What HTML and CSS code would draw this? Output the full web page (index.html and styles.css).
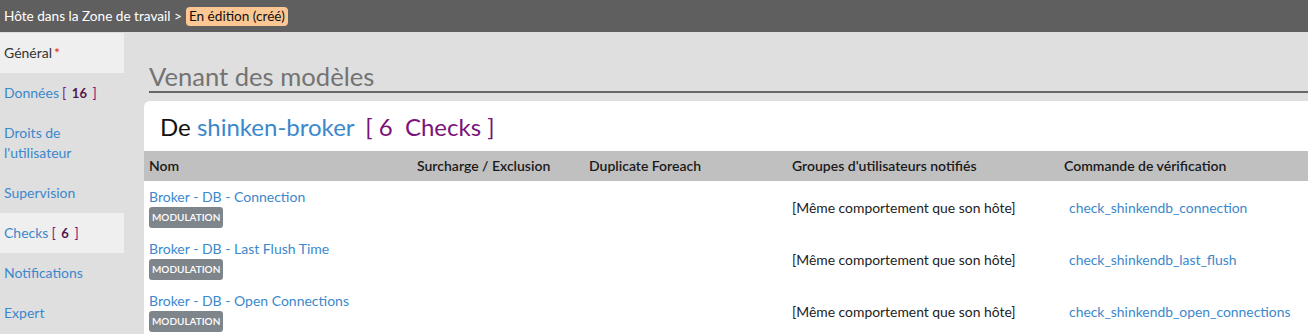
FILE: index.html
```html
<!DOCTYPE html>
<html lang="fr">
<head>
  <meta charset="UTF-8">
  <meta name="viewport" content="width=device-width, initial-scale=1.0">
  <title>Hôte dans la Zone de travail</title>
  <link rel="stylesheet" href="styles.css">
</head>
<body>
  <div class="topbar">
    <span>Hôte dans la Zone de travail &gt;</span>
    <span class="state">En édition (créé)</span>
  </div>

  <div class="page">
    <div class="sidebar">
      <a class="tab active">Général<span class="required">*</span></a>
      <a class="tab">Données<span class="count">[ <b>16</b> ]</span></a>
      <a class="tab">Droits de l'utilisateur</a>
      <a class="tab">Supervision</a>
      <a class="tab active">Checks<span class="count">[ <b>6</b> ]</span></a>
      <a class="tab">Notifications</a>
      <a class="tab">Expert</a>
    </div>

    <div class="content">
      <h2 class="section-title">Venant des modèles</h2>

      <div class="panel">
        <div class="panel-title">
          De <a class="template">shinken-broker</a>
          <span class="total">[ 6 &nbsp;Checks ]</span>
        </div>

        <div class="checks">
          <div class="row head">
            <div>Nom</div>
            <div>Surcharge / Exclusion</div>
            <div>Duplicate Foreach</div>
            <div>Groupes d'utilisateurs notifiés</div>
            <div>Commande de vérification</div>
          </div>
          <div class="row">
            <div><a>Broker - DB - Connection</a><span class="badge">MODULATION</span></div>
            <div></div>
            <div></div>
            <div class="mid">[Même comportement que son hôte]</div>
            <div class="mid command"><a>check_shinkendb_connection</a></div>
          </div>
          <div class="row">
            <div><a>Broker - DB - Last Flush Time</a><span class="badge">MODULATION</span></div>
            <div></div>
            <div></div>
            <div class="mid">[Même comportement que son hôte]</div>
            <div class="mid command"><a>check_shinkendb_last_flush</a></div>
          </div>
          <div class="row">
            <div><a>Broker - DB - Open Connections</a><span class="badge">MODULATION</span></div>
            <div></div>
            <div></div>
            <div class="mid">[Même comportement que son hôte]</div>
            <div class="mid command"><a>check_shinkendb_open_connections</a></div>
          </div>
        </div>
      </div>
    </div>
  </div>
</body>
</html>
```

FILE: styles.css
```css
body {
  font-family: Lato, "Open Sans", sans-serif;
  font-size: 14px;
  margin: 0;
  padding: 0;
  background-color: #dfdfdf;
  color: #222;
  overflow: hidden;
}
a {
  color: #3b88cc;
  text-decoration: none;
  cursor: pointer;
}

/* top bar */
.topbar {
  height: 32px;
  background-color: #5f5f5f;
  color: #fff;
  display: flex;
  align-items: center;
  padding-left: 4px;
  gap: 4px;
  font-size: 13.6px;
}
.state {
  background-color: #fcc793;
  color: #111;
  border-radius: 4px;
  padding: 1px 3px;
  line-height: 17px;
}

/* layout */
.page {
  display: flex;
}
.sidebar {
  width: 124px;
  flex-shrink: 0;
  padding-top: 1px;
  border-bottom: 1px solid #d0d0d0;
}
.tab {
  display: block;
  padding: 10px 4px;
  line-height: 20px;
  height: 20px;
}
.tab:nth-child(3) {
  height: 40px;
}
.tab.active {
  background-color: #efefef;
}
.tab:first-child {
  color: #333;
}
.required {
  color: #e02020;
  margin-left: 2px;
}
.count {
  color: #7a1a7a;
  margin-left: 3px;
}
.count b {
  color: #55154f;
  padding: 0 2px;
  font-size: 13px;
}

/* content */
.content {
  flex: 1;
  padding-left: 20px;
}
.section-title {
  font-size: 25.6px;
  font-weight: normal;
  color: #737373;
  margin: 29px 0 0 5px;
  line-height: 30px;
  border-bottom: 2px solid #666;
}
.panel {
  margin-top: 8px;
  background-color: #fff;
  border-radius: 6px 0 0 0;
}
.panel-title {
  font-size: 24px;
  color: #111;
  padding: 11px 16px 9px;
  line-height: 30px;
}
.template {
  color: #3b88cc;
}
.total {
  color: #7a137a;
  margin-left: 5px;
}

/* table */
.row {
  display: grid;
  grid-template-columns: 268px 172px 203px 272px 1fr;
  height: 52px;
}
.row > div {
  padding: 7px 5px 0;
}
.row.head {
  background-color: #c0c0c0;
  height: 30px;
  font-weight: 600;
  color: #1a1a1a;
}
.row.head > div {
  padding-top: 6px;
}
.row a {
  display: block;
  line-height: 17px;
}
.row .mid {
  padding-top: 18px;
  font-size: 13.9px;
}
.row .command {
  padding-left: 10px;
}
.badge {
  display: inline-block;
  margin-top: 2px;
  background-color: #7e868c;
  color: #fff;
  font-size: 10px;
  font-weight: 600;
  line-height: 21px;
  padding: 0 3px;
  border-radius: 3px;
}
```
